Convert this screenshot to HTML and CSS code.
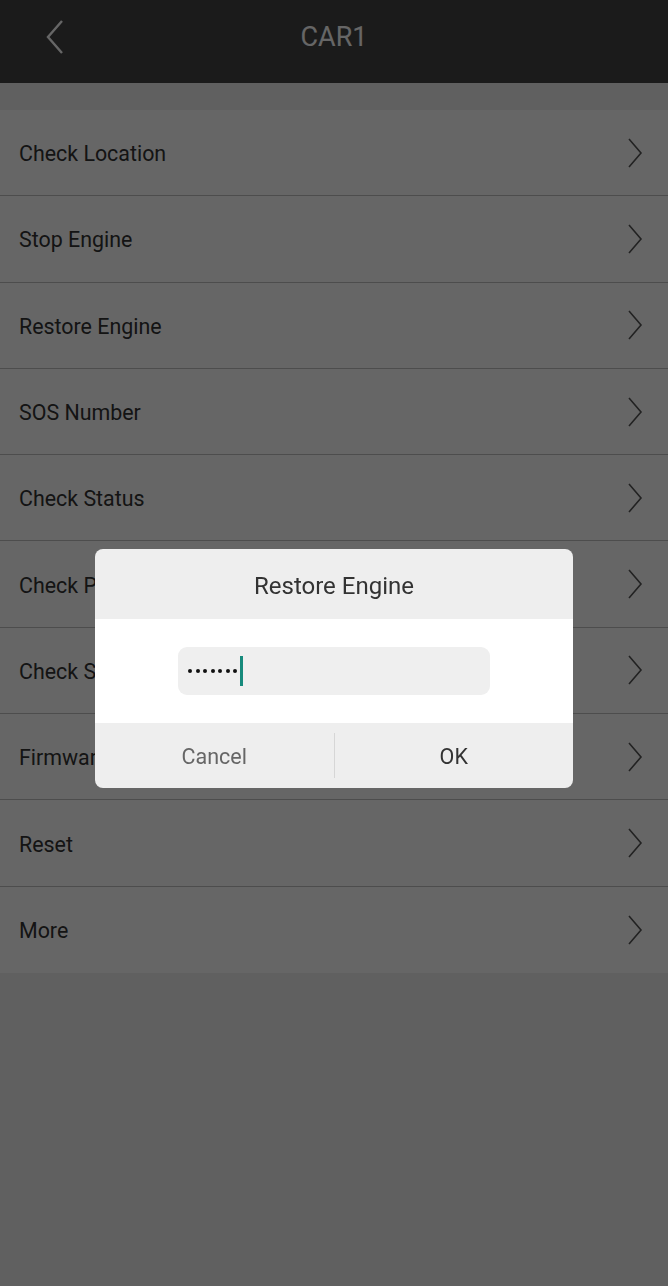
FILE: index.html
```html
<!DOCTYPE html>
<html lang="en">

<head>
  <meta charset="UTF-8" />
  <meta name="viewport" content="width=device-width, initial-scale=1.0" />
  <title>CAR1</title>
  <link rel="stylesheet" href="styles.css">
</head>

<body>

  <div class="header">
    <div class="back">
      <svg width="20" height="36" viewBox="0 0 20 36"><path d="M17 2 L3 18 L17 34" fill="none" stroke="#fff" stroke-width="2.4" /></svg>
    </div>
    <div class="title">CAR1</div>
  </div>

  <ul class="menu">
    <li><span>Check Location</span><svg class="arrow" width="16" height="30" viewBox="0 0 16 30"><path d="M2 1 L14 15 L2 29" fill="none" stroke="#555" stroke-width="1.6" /></svg></li>
    <li><span>Stop Engine</span><svg class="arrow" width="16" height="30" viewBox="0 0 16 30"><path d="M2 1 L14 15 L2 29" fill="none" stroke="#555" stroke-width="1.6" /></svg></li>
    <li><span>Restore Engine</span><svg class="arrow" width="16" height="30" viewBox="0 0 16 30"><path d="M2 1 L14 15 L2 29" fill="none" stroke="#555" stroke-width="1.6" /></svg></li>
    <li><span>SOS Number</span><svg class="arrow" width="16" height="30" viewBox="0 0 16 30"><path d="M2 1 L14 15 L2 29" fill="none" stroke="#555" stroke-width="1.6" /></svg></li>
    <li><span>Check Status</span><svg class="arrow" width="16" height="30" viewBox="0 0 16 30"><path d="M2 1 L14 15 L2 29" fill="none" stroke="#555" stroke-width="1.6" /></svg></li>
    <li><span>Check Parameters</span><svg class="arrow" width="16" height="30" viewBox="0 0 16 30"><path d="M2 1 L14 15 L2 29" fill="none" stroke="#555" stroke-width="1.6" /></svg></li>
    <li><span>Check Settings</span><svg class="arrow" width="16" height="30" viewBox="0 0 16 30"><path d="M2 1 L14 15 L2 29" fill="none" stroke="#555" stroke-width="1.6" /></svg></li>
    <li><span>Firmware Version</span><svg class="arrow" width="16" height="30" viewBox="0 0 16 30"><path d="M2 1 L14 15 L2 29" fill="none" stroke="#555" stroke-width="1.6" /></svg></li>
    <li><span>Reset</span><svg class="arrow" width="16" height="30" viewBox="0 0 16 30"><path d="M2 1 L14 15 L2 29" fill="none" stroke="#555" stroke-width="1.6" /></svg></li>
    <li><span>More</span><svg class="arrow" width="16" height="30" viewBox="0 0 16 30"><path d="M2 1 L14 15 L2 29" fill="none" stroke="#555" stroke-width="1.6" /></svg></li>
  </ul>

  <div class="overlay">
    <div class="dialog">
      <div class="dialog-title">Restore Engine</div>
      <div class="dialog-body">
        <div class="field">
          <span class="dot"></span><span class="dot"></span><span class="dot"></span><span class="dot"></span><span class="dot"></span><span class="dot"></span><span class="dot"></span>
          <span class="cursor"></span>
        </div>
      </div>
      <div class="dialog-buttons">
        <button class="cancel">Cancel</button>
        <button class="ok">OK</button>
      </div>
    </div>
  </div>

</body>

</html>
```

FILE: styles.css
```css
body {
  margin: 0;
  font-family: Roboto, 'Noto Sans', sans-serif;
  background-color: #f0f0f0;
  height: 1286px;
  overflow: hidden;
}

.header {
  height: 83px;
  box-sizing: border-box;
  padding-bottom: 9px;
  background-color: #444445;
  display: flex;
  align-items: center;
  justify-content: center;
  position: relative;
}

.back {
  position: absolute;
  left: 45px;
  top: 19px;
}

.title {
  color: #fff;
  font-size: 27px;
}

.menu {
  list-style: none;
  margin: 27px 0 0;
  padding: 0;
  background: #fff;
}

.menu li {
  height: 86.3px;
  box-sizing: border-box;
  border-bottom: 1px solid #c0c0c0;
  display: flex;
  align-items: center;
  justify-content: space-between;
  padding: 2px 25px 0 19px;
  font-size: 21.4px;
  color: #333;
}

.menu li .arrow {
  margin-top: -2px;
}

.menu li:last-child {
  border-bottom: none;
  height: 86px;
}

.overlay {
  position: fixed;
  top: 0;
  left: 0;
  width: 100%;
  height: 100%;
  background: rgba(0, 0, 0, 0.6);
}

.dialog {
  position: absolute;
  left: 95px;
  top: 549px;
  width: 478px;
  border-radius: 8px;
  overflow: hidden;
  background: #eeeeee;
}

.dialog-title {
  height: 70px;
  box-sizing: border-box;
  padding-top: 3px;
  display: flex;
  align-items: center;
  justify-content: center;
  font-size: 24px;
  color: #333;
}

.dialog-body {
  background: #fff;
  height: 104px;
  display: flex;
  align-items: center;
  justify-content: center;
}

.field {
  width: 312px;
  height: 48px;
  background: #efefef;
  border-radius: 9px;
  box-sizing: border-box;
  padding-left: 10px;
  display: flex;
  align-items: center;
  gap: 3.5px;
}

.dot {
  width: 4px;
  height: 4px;
  border-radius: 50%;
  background: #111;
}

.cursor {
  width: 3px;
  height: 30px;
  background: #178a7c;
  margin-left: -1px;
}

.dialog-buttons {
  height: 65px;
  display: flex;
  align-items: center;
}

.dialog-buttons button {
  flex: 1;
  height: 45px;
  padding-top: 2px;
  background: transparent;
  border: none;
  font-family: inherit;
  font-size: 21.5px;
}

.cancel {
  color: #666;
  border-right: 1px solid #d6d6d6 !important;
}

.ok {
  color: #333;
}
```
